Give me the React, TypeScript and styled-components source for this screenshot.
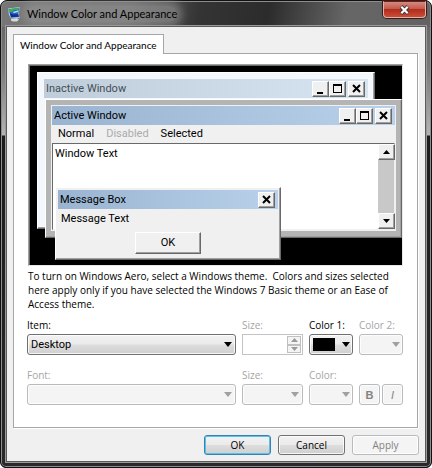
import React from "react";
import styled, { createGlobalStyle, css } from "styled-components";

const GlobalStyle = createGlobalStyle`
  *, *::before, *::after { box-sizing: border-box; }
  body { margin: 0; background: #fff; }
  body, button, input, select {
    font-family: Roboto, "Open Sans", sans-serif;
    font-size: 11px;
    line-height: 14px;
    color: #000;
  }
`;

const small = css`
  font-family: "Open Sans", "Noto Sans", sans-serif;
  font-size: 10px;
`;

const Frame = styled.div`
  display: flex;
  flex-direction: column;
  border: 1px solid #111;
  border-radius: 7px 7px 6px 6px;
  padding: 0 5px 5px;
  background:
    linear-gradient(100deg, #777 0, #686868 30%, #343434 46%, #2c2c2c 62%, #666 80%, #626262 100%) 0 0 / 100% 26px no-repeat,
    linear-gradient(#686868, #787878 40px, #b4b4b4 108px, #1c1c1c 109px, #2a2a2a) 100% 26px / 8px 100% no-repeat,
    linear-gradient(#686868, #787878 40px, #b4b4b4 108px, #1c1c1c 109px, #2a2a2a) 0 26px / 8px 100% no-repeat,
    #2a2a2a;
  box-shadow: inset 0 0 0 1px #8d8d8d;
`;

const TitleBar = styled.header`
  display: flex;
  align-items: flex-start;
  justify-content: space-between;
  height: 25px;
  padding-left: 2px;
`;

const Title = styled.h1`
  display: flex;
  align-items: center;
  gap: 6px;
  margin: 5px 0 0;
  font-family: Lato, "Open Sans", sans-serif;
  font-size: 11px;
  line-height: 16px;
  font-weight: 400;
`;

const TitleText = styled.span`
  border-radius: 8px;
  background: rgba(155, 155, 155, 0.55);
  box-shadow: 0 0 8px 5px rgba(155, 155, 155, 0.55);
`;

const CloseButton = styled.button`
  display: grid;
  place-items: center;
  width: 43px;
  height: 17px;
  padding: 0;
  border: 1px solid #dcb5ae;
  border-top-color: #69211a;
  border-radius: 0 0 4px 4px;
  background: linear-gradient(#d48a80, #c4594c 45%, #b12d1d 50%, #cb4c35);
  box-shadow: 0 0 0 1px #3b1a17;
`;

const Client = styled.main`
  padding: 7px 7px 6px 6px;
  border: 1px solid #5b5b5b;
  outline: 1px solid #9a9a9a;
  background: #f0f0f0;
`;

const Tab = styled.button`
  display: block;
  height: 20px;
  margin: 0 0 -1px;
  padding: 0 6px;
  border: 1px solid #a3a6ab;
  border-bottom: 0;
  background: #fff;
  position: relative;
  font-family: Lato, "Open Sans", sans-serif;
  font-size: 10px;
`;

const Panel = styled.section`
  padding: 10px 14px 22px;
  border: 1px solid #a3a6ab;
  background: #fff;
  box-shadow: 1px 1px 0 #fff;
`;

const Desktop = styled.div`
  position: relative;
  height: 202px;
  margin-bottom: 3px;
  border: 1px solid;
  border-color: #a0a0a0 #e8e8e8 #e8e8e8 #a0a0a0;
  background: #000;
  box-shadow: inset 1px 1px 0 #696969;
`;

const raised = css`
  border: 1px solid;
  border-color: #fff #696969 #696969 #fff;
  box-shadow: inset -1px -1px 0 #a0a0a0;
`;

type Kind = "inactive" | "active" | "message";

const places = {
  inactive: css`left: 8px; top: 7px; right: 27px; height: 157px; padding: 6px; background: #f4f7fc;`,
  active: css`left: 16px; top: 34px; right: 0; height: 139px; padding: 5px 5px 6px; background: #b4b4b4;`,
  message: css`left: 26px; top: 122px; width: 226px; height: 73px; padding: 2px; background: #f0f0f0;`,
};

const PreviewWindow = styled.div<{ $kind: Kind }>`
  position: absolute;
  display: flex;
  flex-direction: column;
  ${raised}
  ${(p) => places[p.$kind]}
`;

const Inner = styled.div`
  flex: 1;
  display: flex;
  flex-direction: column;
  border: 1px solid #f0f0f0;
  background: #f0f0f0;
`;

const Caption = styled.div<{ $dim?: boolean }>`
  display: flex;
  align-items: center;
  justify-content: space-between;
  height: 19px;
  padding: 0 3px 0 2px;
  color: ${(p) => (p.$dim ? "#434e54" : "#000")};
  background: ${(p) =>
    p.$dim ? "linear-gradient(90deg, #bfcddb, #d7e4f2)" : "linear-gradient(90deg, #99b4d1, #b9d1ea)"};
`;

const CaptionButtons = styled.div`
  display: flex;
`;

const Bevel = styled.button<{ $gap?: boolean }>`
  display: grid;
  place-items: center;
  width: 17px;
  height: 16px;
  margin-left: ${(p) => (p.$gap ? "2px" : "0")};
  padding: 0;
  background: #f0f0f0;
  ${raised}
`;

const PreviewMenu = styled.div`
  display: flex;
  align-items: center;
  gap: 12px;
  height: 18px;
  padding: 0 6px;
`;

const MenuWord = styled.span<{ $off?: boolean }>`
  color: ${(p) => (p.$off ? "#ababab" : "#000")};
`;

const TextArea = styled.div`
  flex: 1;
  display: flex;
  justify-content: space-between;
  border: 1px solid;
  border-color: #696969 #f0f0f0 #f0f0f0 #696969;
  background: #fff;
`;

const WindowText = styled.span`
  padding: 3px 2px;
`;

const ScrollTrack = styled.div`
  display: flex;
  flex-direction: column;
  justify-content: space-between;
  width: 16px;
  background: #c8c8c8;
`;

const MessageBody = styled.div`
  flex: 1;
  display: flex;
  flex-direction: column;
  align-items: center;
  justify-content: space-between;
  padding: 3px;
`;

const MessageText = styled.span`
  align-self: flex-start;
`;

const MessageButton = styled.button`
  width: 66px;
  height: 22px;
  padding: 0;
  background: #f0f0f0;
  ${raised}
`;

const Note = styled.p`
  margin: 0 0 7px;
  white-space: pre-wrap;
  ${small}
`;

const Fields = styled.div`
  display: grid;
  grid-template-columns: minmax(0, 1fr) 61px 44px 44px;
  column-gap: 6px;
  row-gap: 13px;
  margin-left: -1px;
`;

const Field = styled.div<{ $off?: boolean }>`
  display: flex;
  flex-direction: column;
  justify-content: flex-end;
  gap: 2px;
  color: ${(p) => (p.$off ? "#a5a5a5" : "#000")};
`;

const FieldLabel = styled.label`
  white-space: nowrap;
  ${small}
`;

const Stack = styled.div`
  display: grid;
  align-items: center;
  > * { grid-area: 1 / 1; }
  > svg { justify-self: end; margin-right: 4px; pointer-events: none; }
`;

const face = css`
  border: 1px solid #707070;
  border-radius: 3px;
  background: linear-gradient(#f2f2f2, #ebebeb 48%, #dddddd 52%, #cfcfcf);
  box-shadow: inset 0 0 0 1px rgba(255, 255, 255, 0.8);
  &:disabled {
    border-color: #b8bbbe;
    background: #f4f4f4;
    color: #838383;
    opacity: 1;
  }
`;

const Select = styled.select`
  appearance: none;
  width: 100%;
  height: 21px;
  padding: 0 18px 0 3px;
  ${face}
`;

const ColorButton = styled.button`
  display: flex;
  align-items: center;
  justify-content: space-between;
  width: 100%;
  height: 21px;
  padding: 0 2px 0 3px;
  ${face}
`;

const Swatch = styled.span<{ $color: string }>`
  width: 22px;
  height: 13px;
  background: ${(p) => p.$color};
`;

const Spinner = styled.div`
  display: flex;
  height: 21px;
  padding: 1px;
  border: 1px solid #c3c3c3;
`;

const SpinInput = styled.input`
  flex: 1;
  min-width: 0;
  border: 0;
  padding: 0 2px;
  background: #fff;
`;

const SpinButtons = styled.div`
  display: flex;
  flex-direction: column;
  width: 14px;
`;

const SpinButton = styled.button`
  flex: 1;
  display: grid;
  place-items: center;
  padding: 0;
  min-height: 0;
  border: 1px solid #c0c0c0;
  background: #f4f4f4;
`;

const StylePair = styled.div`
  display: flex;
  align-items: flex-end;
  gap: 2px;
`;

const StyleButton = styled.button<{ $italic?: boolean }>`
  flex: 1;
  height: 21px;
  padding: 0;
  font-family: "Liberation Sans", sans-serif;
  font-weight: ${(p) => (p.$italic ? 400 : 700)};
  font-style: ${(p) => (p.$italic ? "italic" : "normal")};
  ${face}
`;

const Footer = styled.footer`
  display: flex;
  justify-content: flex-end;
  gap: 7px;
  margin-top: 7px;
  margin-right: -1px;
`;

const PushButton = styled.button<{ $primary?: boolean }>`
  width: 67px;
  height: 20px;
  padding: 0;
  ${small}
  ${face}
  ${(p) => p.$primary && css`border-color: #3c7fb1; box-shadow: inset 0 0 0 1px #55c3ea;`}
`;

const Down = ({ off = false }: { off?: boolean }) => (
  <svg width="8" height="5" viewBox="0 0 8 5" aria-hidden="true">
    <path d="M0 0h8L4 5z" fill={off ? "#a0a0a0" : "#000"} />
  </svg>
);

const SmallArrow = ({ up = false, color = "#000" }: { up?: boolean; color?: string }) => (
  <svg width="7" height="4" viewBox="0 0 7 4" aria-hidden="true">
    <path d={up ? "M0 4h7L3.5 0z" : "M0 0h7L3.5 4z"} fill={color} />
  </svg>
);

const AppIcon = () => (
  <svg width="13" height="15" viewBox="0 0 13 15" aria-hidden="true">
    <path d="M3 12 9 11l2 1.5-2 2H5l-2-1z" fill="#d8dadc" />
    <path d="M0 1.5 12 0l-.5 2-1 6 1.5 3-9 .5L1 8z" fill="#b4cfe2" />
    <path d="M0.5 2.3 11.5 0.8 10 7l1 3-8 0.5z" fill="#2b62c8" />
    <path d="M0.5 2.3 11.5 0.8 10.5 2.8 6 3.3 3.5 5 1 5z" fill="#3db04c" />
    <path d="M4.5 5 10.5 3.2 10 5 6 6z" fill="#a5ecf8" />
    <path d="M2 6 5 7.5 10 7l1 2.8-8 .5z" fill="#122f90" />
  </svg>
);

const glyphs = {
  Minimize: <path d="M3 10h6v2H3z" fill="#000" />,
  Maximize: <path d="M2 2h9v9H2zM3 4v6h7V4z" fill="#000" fillRule="evenodd" />,
  Close: <path d="M3 3l7 7M10 3l-7 7" stroke="#000" strokeWidth="2" />,
};

const CaptionButton = ({ kind }: { kind: keyof typeof glyphs }) => (
  <Bevel type="button" aria-label={kind} $gap={kind === "Close"}>
    <svg width="13" height="13" viewBox="0 0 13 13" aria-hidden="true">{glyphs[kind]}</svg>
  </Bevel>
);

const AllCaptionButtons = () => (
  <CaptionButtons>
    <CaptionButton kind="Minimize" />
    <CaptionButton kind="Maximize" />
    <CaptionButton kind="Close" />
  </CaptionButtons>
);

function Preview() {
  return (
    <Desktop>
      <PreviewWindow $kind="inactive">
        <Caption $dim>
          Inactive Window
          <AllCaptionButtons />
        </Caption>
      </PreviewWindow>
      <PreviewWindow $kind="active">
        <Inner>
          <Caption>
            Active Window
            <AllCaptionButtons />
          </Caption>
          <PreviewMenu>
            <MenuWord>Normal</MenuWord>
            <MenuWord $off>Disabled</MenuWord>
            <MenuWord>Selected</MenuWord>
          </PreviewMenu>
          <TextArea>
            <WindowText>Window Text</WindowText>
            <ScrollTrack>
              <Bevel type="button" aria-label="Scroll up"><SmallArrow up /></Bevel>
              <Bevel type="button" aria-label="Scroll down"><SmallArrow /></Bevel>
            </ScrollTrack>
          </TextArea>
        </Inner>
      </PreviewWindow>
      <PreviewWindow $kind="message">
        <Caption>
          Message Box
          <CaptionButton kind="Close" />
        </Caption>
        <MessageBody>
          <MessageText>Message Text</MessageText>
          <MessageButton type="button">OK</MessageButton>
        </MessageBody>
      </PreviewWindow>
    </Desktop>
  );
}

export default function App() {
  return (
    <>
      <GlobalStyle />
      <Frame>
        <TitleBar>
          <Title>
            <AppIcon />
            <TitleText>Window Color and Appearance</TitleText>
          </Title>
          <CloseButton type="button" aria-label="Close">
            <svg width="11" height="10" viewBox="0 0 11 10" aria-hidden="true">
              <path d="M2 1.5l7 7M9 1.5l-7 7" stroke="#4a3333" strokeWidth="4" />
              <path d="M2.3 1.8l6.4 6.4M8.7 1.8l-6.4 6.4" stroke="#fff" strokeWidth="2.2" />
            </svg>
          </CloseButton>
        </TitleBar>
        <Client>
          <Tab type="button" role="tab" aria-selected="true">Window Color and Appearance</Tab>
          <Panel>
            <Preview />
            <Note>
              {"To turn on Windows Aero, select a Windows theme.  Colors and sizes selected here apply only if you have selected the Windows 7 Basic theme or an Ease of Access theme."}
            </Note>
            <Fields>
              <Field>
                <FieldLabel htmlFor="item">Item:</FieldLabel>
                <Stack>
                  <Select id="item"><option>Desktop</option></Select>
                  <Down />
                </Stack>
              </Field>
              <Field $off>
                <FieldLabel htmlFor="item-size">Size:</FieldLabel>
                <Spinner>
                  <SpinInput id="item-size" type="text" disabled />
                  <SpinButtons>
                    <SpinButton type="button" disabled aria-label="Increase size"><SmallArrow up color="#999" /></SpinButton>
                    <SpinButton type="button" disabled aria-label="Decrease size"><SmallArrow color="#999" /></SpinButton>
                  </SpinButtons>
                </Spinner>
              </Field>
              <Field>
                <FieldLabel htmlFor="color-1">Color 1:</FieldLabel>
                <ColorButton id="color-1" type="button" aria-haspopup="listbox">
                  <Swatch $color="#000" />
                  <Down />
                </ColorButton>
              </Field>
              <Field $off>
                <FieldLabel htmlFor="color-2">Color 2:</FieldLabel>
                <ColorButton id="color-2" type="button" aria-haspopup="listbox" disabled>
                  <Swatch $color="transparent" />
                  <Down off />
                </ColorButton>
              </Field>
              <Field $off>
                <FieldLabel htmlFor="font">Font:</FieldLabel>
                <Stack>
                  <Select id="font" disabled />
                  <Down off />
                </Stack>
              </Field>
              <Field $off>
                <FieldLabel htmlFor="font-size">Size:</FieldLabel>
                <Stack>
                  <Select id="font-size" disabled />
                  <Down off />
                </Stack>
              </Field>
              <Field $off>
                <FieldLabel htmlFor="font-color">Color:</FieldLabel>
                <ColorButton id="font-color" type="button" aria-haspopup="listbox" disabled>
                  <Swatch $color="transparent" />
                  <Down off />
                </ColorButton>
              </Field>
              <StylePair>
                <StyleButton type="button" disabled>B</StyleButton>
                <StyleButton type="button" disabled $italic>I</StyleButton>
              </StylePair>
            </Fields>
          </Panel>
          <Footer>
            <PushButton type="button" $primary>OK</PushButton>
            <PushButton type="button">Cancel</PushButton>
            <PushButton type="button" disabled>Apply</PushButton>
          </Footer>
        </Client>
      </Frame>
    </>
  );
}
